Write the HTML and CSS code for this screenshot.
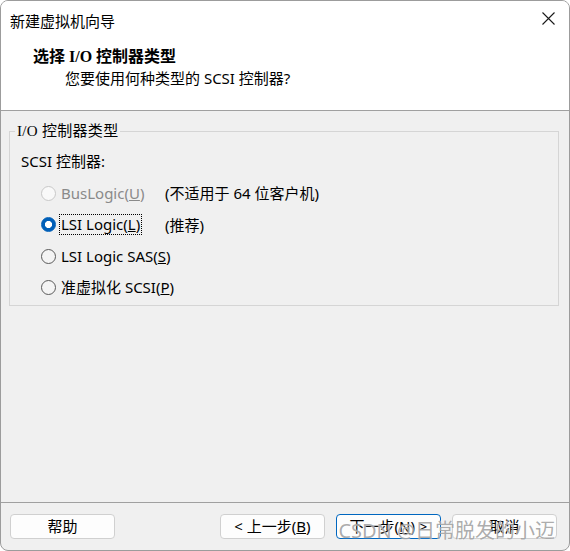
FILE: index.html
```html
<!DOCTYPE html>
<html lang="zh-CN">
<head>
<meta charset="utf-8">
<title>新建虚拟机向导</title>
<link rel="stylesheet" href="styles.css">
</head>
<body>
<div class="window">
  <div class="top">
    <div class="titlebar">
      <span class="title">新建虚拟机向导</span>
      <svg class="close" width="13" height="13" viewBox="0 0 13 13"><path d="M0.5 0.5 L12.5 12.5 M12.5 0.5 L0.5 12.5" stroke="#1a1a1a" stroke-width="1.1" fill="none"/></svg>
    </div>
    <div class="header">
      <div class="h-title">选择 I/O 控制器类型</div>
      <div class="h-sub">您要使用何种类型的 SCSI 控制器?</div>
    </div>
  </div>
  <div class="content">
    <fieldset class="group">
      <legend>I/O 控制器类型</legend>
      <div class="inner">
        <div class="caption">SCSI 控制器:</div>
        <div class="rows">
          <div class="row">
            <span class="radio disabled"></span>
            <span class="lblcell"><span class="lbl dim">BusLogic(<u>U</u>)</span></span>
            <span class="note">(不适用于 64 位客户机)</span>
          </div>
          <div class="row">
            <span class="radio checked"></span>
            <span class="lblcell"><span class="lbl focus">LSI Logic(<u>L</u>)</span></span>
            <span class="note">(推荐)</span>
          </div>
          <div class="row">
            <span class="radio"></span>
            <span class="lblcell"><span class="lbl">LSI Logic SAS(<u>S</u>)</span></span>
          </div>
          <div class="row">
            <span class="radio"></span>
            <span class="lblcell"><span class="lbl">准虚拟化 SCSI(<u>P</u>)</span></span>
          </div>
        </div>
      </div>
    </fieldset>
  </div>
  <div class="footer">
    <button class="btn">帮助</button>
    <div class="right">
      <button class="btn">&lt; 上一步(<u>B</u>)</button>
      <button class="btn default">下一步(<u>N</u>) &gt;</button>
      <button class="btn">取消</button>
    </div>
  </div>
  <div class="watermark">CSDN @日常脱发的小迈</div>
</div>
</body>
</html>
```
FILE: styles.css
```css
* { box-sizing: border-box; }
html, body { margin: 0; background: #fff; }
body {
  font-family: "Noto Sans", "Noto Sans CJK SC", sans-serif;
  font-size: 15px;
  color: #000;
}
.window {
  position: relative;
  width: 570px;
  height: 551px;
  border: 1px solid #9c9c9c;
  border-radius: 8px;
  overflow: hidden;
  display: flex;
  flex-direction: column;
  background: #f0f0f0;
}
.top {
  background: #fff;
  height: 110px;
  border-bottom: 1px solid #a0a0a0;
  flex: none;
}
.titlebar {
  height: 39px;
  display: flex;
  align-items: center;
  justify-content: space-between;
  padding: 0 14px 0 9px;
}
.title { line-height: 20px; }
.close { margin-bottom: 4px; }
.header { padding: 6px 0 0 32px; }
.h-title {
  font-family: "Liberation Serif", "Noto Sans CJK SC", serif;
  font-size: 16px;
  font-weight: bold;
  line-height: 21px;
}
.h-sub {
  margin-top: 1px;
  padding-left: 32px;
  line-height: 20px;
}
.content {
  flex: 1;
  padding: 10px 10px 0 8px;
}
.group {
  margin: 0;
  padding: 0 5px 7px;
  border: 1px solid #d5d5d5;
  min-width: 0;
}
.group legend {
  padding: 0 2px;
  line-height: 20px;
  font-family: "Liberation Serif", "Noto Sans CJK SC", serif;
  letter-spacing: 0.3px;
}
.inner { padding: 10px 0 0 6px; }
.caption { line-height: 20px; }
.rows {
  margin-top: 12px;
  display: flex;
  flex-direction: column;
  gap: 11.5px;
}
.row {
  display: flex;
  align-items: center;
  height: 20px;
}
.radio {
  flex: none;
  width: 15px;
  height: 15px;
  margin-left: 20px;
  border-radius: 50%;
  border: 1px solid #5a5a5a;
  background: #f4f4f4;
}
.radio.disabled {
  border-color: #c8c8c8;
  background: #f9f9f9;
}
.radio.checked {
  border-color: #005fb8;
  background: radial-gradient(circle, #fff 0 3.2px, #005fb8 3.9px);
}
.lblcell {
  flex: none;
  width: 105px;
  margin-left: 4px;
  display: flex;
}
.lbl {
  padding: 0 1px;
  line-height: 19px;
  white-space: nowrap;
}
.lbl.dim { color: #8a8a8a; }
.lbl.focus { outline: 1px dotted #000; outline-offset: 0; }
.note { line-height: 20px; white-space: nowrap; }
.footer {
  flex: none;
  height: 48px;
  border-top: 1px solid #a0a0a0;
  padding: 11px 12px 0 9px;
  display: flex;
  align-items: flex-start;
}
.right {
  margin-left: auto;
  display: flex;
  gap: 11px;
}
.btn {
  width: 105px;
  height: 25px;
  padding: 0;
  font-family: "Noto Sans", "Noto Sans CJK SC", sans-serif;
  font-size: 15px;
  line-height: 23px;
  color: #000;
  background: #fdfdfd;
  border: 1px solid #d0d0d0;
  border-radius: 4px;
}
.btn.default { border-color: #0067c0; }
.watermark {
  position: absolute;
  right: 14px;
  bottom: 6px;
  font-size: 20px;
  line-height: 26px;
  color: rgba(125, 125, 125, 0.65);
  text-shadow: 0 0 1px rgba(255, 255, 255, 0.9);
  pointer-events: none;
  white-space: nowrap;
}
```
